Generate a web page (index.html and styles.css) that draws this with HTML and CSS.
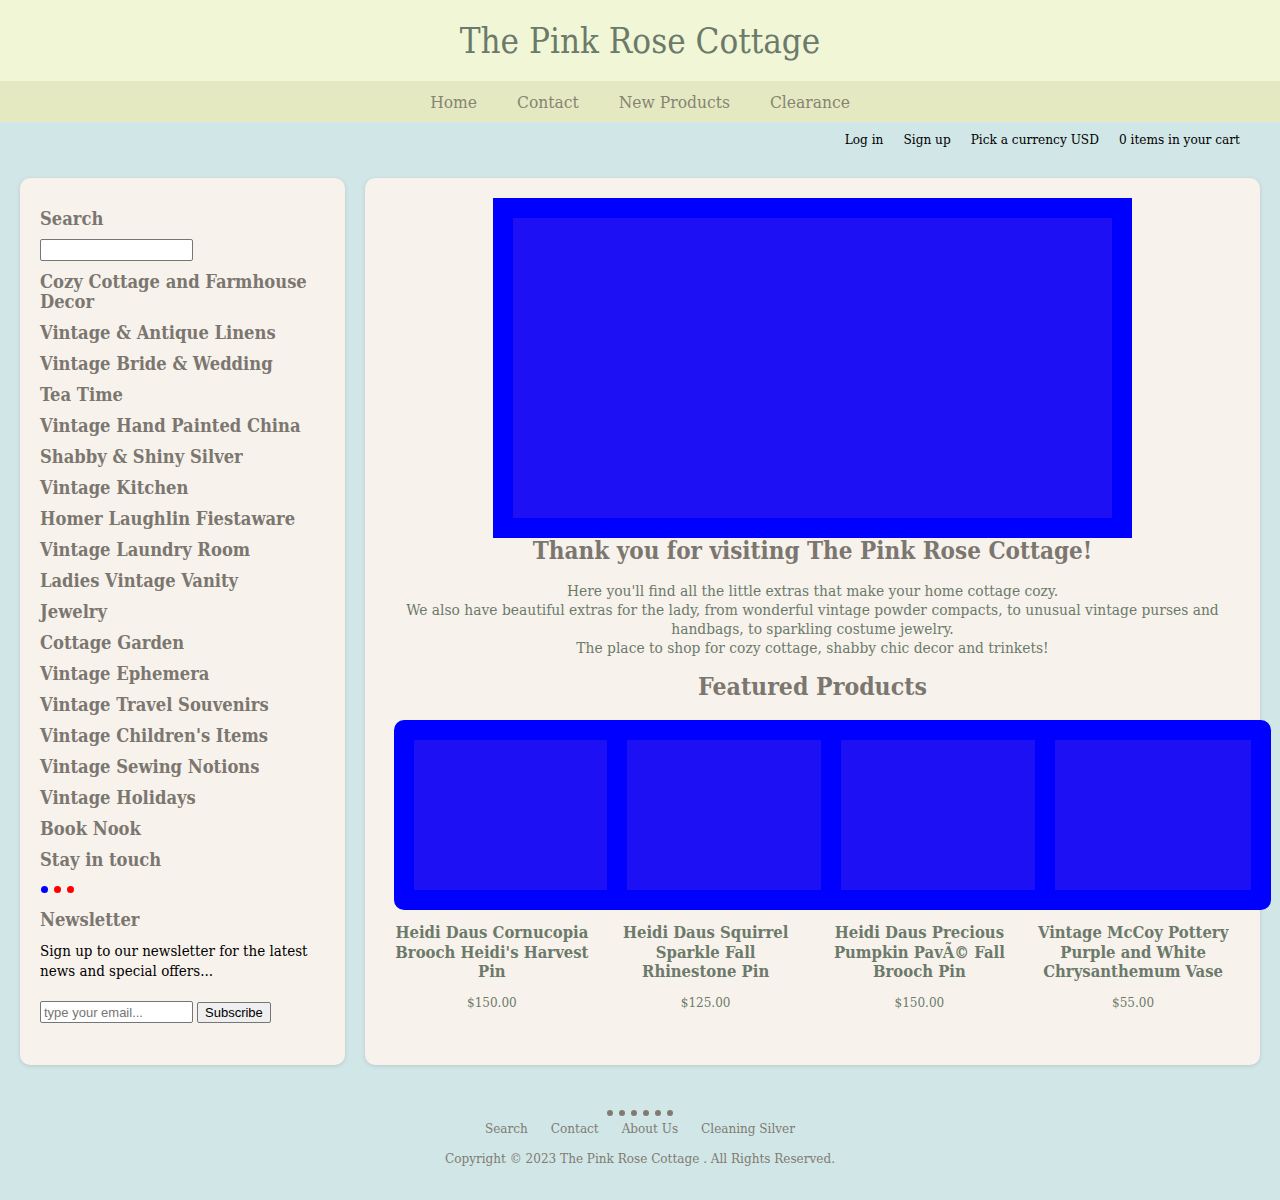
FILE: index.html
```html
<!DOCTYPE html>
<html lang="en">
<head>
<meta charset="utf-8">
<title>The Pink Rose Cottage</title>
<link rel="stylesheet" href="styles.css">
</head>
<body>
<header class="site-header">
  <h1 class="site-title">The Pink Rose Cottage</h1>
</header>
<nav class="main-nav">
  <a href="#">Home</a>
  <a href="#">Contact</a>
  <a href="#">New Products</a>
  <a href="#">Clearance</a>
</nav>
<div class="account-bar">
  <a href="#">Log in</a>
  <a href="#">Sign up</a>
  <span>Pick a currency USD</span>
  <a href="#">0 items in your cart</a>
</div>
<div class="layout">
  <aside class="sidebar card">
    <h3 class="side-heading">Search</h3>
    <input class="text-input" type="text">
    <ul class="cat-list">
      <li>Cozy Cottage and Farmhouse Decor</li>
      <li>Vintage &amp; Antique Linens</li>
      <li>Vintage Bride &amp; Wedding</li>
      <li>Tea Time</li>
      <li>Vintage Hand Painted China</li>
      <li>Shabby &amp; Shiny Silver</li>
      <li>Vintage Kitchen</li>
      <li>Homer Laughlin Fiestaware</li>
      <li>Vintage Laundry Room</li>
      <li>Ladies Vintage Vanity</li>
      <li>Jewelry</li>
      <li>Cottage Garden</li>
      <li>Vintage Ephemera</li>
      <li>Vintage Travel Souvenirs</li>
      <li>Vintage Children's Items</li>
      <li>Vintage Sewing Notions</li>
      <li>Vintage Holidays</li>
      <li>Book Nook</li>
      <li>Stay in touch</li>
    </ul>
    <div class="social-dots">
      <span class="dot blue"></span><span class="dot red"></span><span class="dot red"></span>
    </div>
    <h3 class="side-heading news">Newsletter</h3>
    <p class="news-text">Sign up to our newsletter for the latest news and special offers...</p>
    <form class="news-form">
      <input class="text-input" type="email" placeholder="type your email...">
      <button class="btn" type="button">Subscribe</button>
    </form>
  </aside>
  <main class="content card">
    <div class="hero"><div class="hero-img"></div></div>
    <h2 class="welcome">Thank you for visiting The Pink Rose Cottage!</h2>
    <p class="intro">Here you'll find all the little extras that make your home cottage cozy.<br>We also have beautiful extras for the lady, from wonderful vintage powder compacts, to unusual vintage purses and handbags, to sparkling costume jewelry.<br>The place to shop for cozy cottage, shabby chic decor and trinkets!</p>
    <h2 class="featured">Featured Products</h2>
    <div class="strip">
      <div class="thumb"></div><div class="thumb"></div><div class="thumb"></div><div class="thumb"></div>
    </div>
    <div class="products">
      <div class="product"><h4>Heidi Daus Cornucopia Brooch Heidi's Harvest Pin</h4><p class="price">$150.00</p></div>
      <div class="product"><h4>Heidi Daus Squirrel Sparkle Fall Rhinestone Pin</h4><p class="price">$125.00</p></div>
      <div class="product"><h4>Heidi Daus Precious Pumpkin PavÃ© Fall Brooch Pin</h4><p class="price">$150.00</p></div>
      <div class="product"><h4>Vintage McCoy Pottery Purple and White Chrysanthemum Vase</h4><p class="price">$55.00</p></div>
    </div>
  </main>
</div>
<footer class="site-footer">
  <div class="foot-dots"><span></span><span></span><span></span><span></span><span></span><span></span></div>
  <nav class="foot-links">
    <a href="#">Search</a>
    <a href="#">Contact</a>
    <a href="#">About Us</a>
    <a href="#">Cleaning Silver</a>
  </nav>
  <p class="copyright">Copyright © 2023 The Pink Rose Cottage . All Rights Reserved.</p>
</footer>
</body>
</html>
```
FILE: styles.css
```css
* { box-sizing: border-box; }
html, body { margin: 0; padding: 0; }
body {
  background: #d1e6e7;
  font-family: "DejaVu Serif", "Liberation Serif", serif;
  font-stretch: condensed;
  color: #000;
}
a { text-decoration: none; color: inherit; }

.site-header {
  background: #f1f7d6;
  height: 81px;
  display: flex;
  align-items: center;
  justify-content: center;
}
.site-title {
  margin: 0;
  font-size: 34.7px;
  font-weight: normal;
  color: #6b7a6a;
  line-height: 40px;
}
.main-nav {
  background: #e5e9c1;
  height: 41px;
  display: flex;
  justify-content: center;
  align-items: center;
  gap: 40px;
  font-size: 17.3px;
  color: #858474;
}

.account-bar {
  display: flex;
  justify-content: flex-end;
  gap: 20px;
  padding: 9px 40px 0 0;
  height: 56px;
  font-size: 13.5px;
  line-height: 17px;
  color: #000;
}

.layout {
  display: flex;
  gap: 20px;
  padding: 0 20px;
  align-items: stretch;
}
.card {
  background: #f8f2ec;
  border-radius: 10px;
  box-shadow: 0 1px 4px rgba(0,0,0,0.12);
}
.sidebar {
  width: 325px;
  flex: 0 0 325px;
  padding: 31px 20px 41px;
}
.side-heading {
  margin: 0;
  font-size: 18.2px;
  line-height: 20px;
  color: #7b7770;
}
.text-input {
  display: block;
  width: 153px;
  height: 22px;
  margin: 10px 0 11px;
  border: 1px solid #767676;
  border-radius: 2px;
  background: #fff;
  font-family: "Liberation Sans", Arial, sans-serif;
  font-size: 13px;
  padding: 1px 3px;
}
.text-input::placeholder { color: #757575; }
.cat-list {
  list-style: none;
  margin: 0;
  padding: 0;
}
.cat-list li {
  font-size: 18.2px;
  font-weight: bold;
  line-height: 20px;
  color: #7b7770;
  margin-bottom: 11px;
}
.social-dots {
  display: flex;
  gap: 6px;
  padding-left: 1px;
  margin: 16px 0 17px;
  height: 7px;
}
.dot { width: 7px; height: 7px; border-radius: 50%; }
.dot.blue { background: #0000ff; }
.dot.red { background: #ff0000; }
.news-text {
  margin: 11px 0 20px;
  font-size: 15px;
  line-height: 20px;
  color: #000;
}
.news-form { display: flex; gap: 4px; align-items: center; }
.news-form .text-input { margin: 0; }
.btn {
  height: 21px;
  padding: 0 7px;
  font-family: "Liberation Sans", Arial, sans-serif;
  font-size: 13px;
  background: #efefef;
  border: 1px solid #767676;
  border-radius: 2px;
  color: #000;
}

.content {
  flex: 1;
  padding: 20px 20px 54px;
  min-width: 0;
}
.hero {
  width: 639px;
  height: 340px;
  margin: 0 auto;
  background: #0000ff;
  padding: 20px 20px;
}
.hero-img { width: 599px; height: 300px; background: #1e10f5; }
.welcome {
  margin: 0;
  text-align: center;
  font-size: 24px;
  line-height: 26px;
  color: #7b7770;
}
.intro {
  margin: 18px 0 0;
  text-align: center;
  font-size: 15.4px;
  line-height: 19px;
  color: #6b7a6a;
}
.featured {
  margin: 16px 0 20px;
  text-align: center;
  font-size: 24.6px;
  line-height: 26px;
  color: #7b7770;
}
.strip {
  width: 877px;
  margin-left: 9px;
  height: 190px;
  background: #0000ff;
  border-radius: 10px;
  padding: 20px;
  display: grid;
  grid-template-columns: 193px 194px 194px 196px;
  gap: 20px;
}
.thumb { background: #1e10f5; height: 150px; }
.products {
  display: grid;
  grid-template-columns: repeat(4, 1fr);
  margin-top: 13px;
}
.product { text-align: center; padding: 0 10px; }
.product h4 {
  margin: 0;
  font-size: 16.5px;
  line-height: 19.5px;
  color: #6b7a6a;
}
.price {
  margin: 13px 0 0;
  font-size: 13.4px;
  line-height: 16px;
  color: #6b7a6a;
}

.site-footer {
  text-align: center;
  padding: 45px 0 30px;
  color: #807b72;
  font-size: 13.4px;
}
.foot-dots {
  display: flex;
  justify-content: center;
  gap: 5.5px;
  height: 6px;
}
.foot-dots span { width: 6.5px; height: 6.5px; border-radius: 50%; background: #807b72; }
.foot-links {
  display: flex;
  justify-content: center;
  gap: 23px;
  margin-top: 4px;
  line-height: 17px;
}
.copyright { margin: 13px 0 0; line-height: 17px; }
```
